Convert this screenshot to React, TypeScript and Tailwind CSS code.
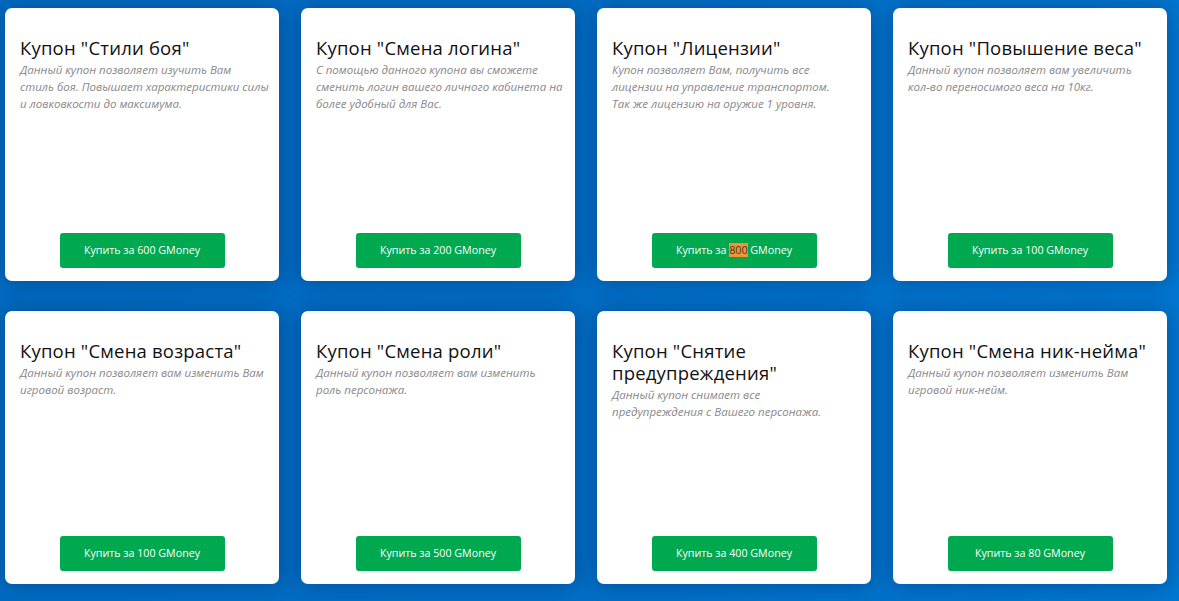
import React from "react";

type Coupon = {
  title: string;
  lines: string[];
  price: string;
  marked?: boolean;
};

const coupons: Coupon[] = [
  {
    title: 'Купон "Стили боя"',
    lines: [
      "Данный купон позволяет изучить Вам",
      "стиль боя. Повышает характеристики силы",
      "и ловковкости до максимума.",
    ],
    price: "600",
  },
  {
    title: 'Купон "Смена логина"',
    lines: [
      "С помощью данного купона вы сможете",
      "сменить логин вашего личного кабинета на",
      "более удобный для Вас.",
    ],
    price: "200",
  },
  {
    title: 'Купон "Лицензии"',
    lines: [
      "Купон позволяет Вам, получить все",
      "лицензии на управление транспортом.",
      "Так же лицензию на оружие 1 уровня.",
    ],
    price: "800",
    marked: true,
  },
  {
    title: 'Купон "Повышение веса"',
    lines: [
      "Данный купон позволяет вам увеличить",
      "кол-во переносимого веса на 10кг.",
    ],
    price: "100",
  },
  {
    title: 'Купон "Смена возраста"',
    lines: ["Данный купон позволяет вам изменить Вам", "игровой возраст."],
    price: "100",
  },
  {
    title: 'Купон "Смена роли"',
    lines: ["Данный купон позволяет вам изменить", "роль персонажа."],
    price: "500",
  },
  {
    title: 'Купон "Снятие предупреждения"',
    lines: ["Данный купон снимает все", "предупреждения с Вашего персонажа."],
    price: "400",
  },
  {
    title: 'Купон "Смена ник-нейма"',
    lines: ["Данный купон позволяет изменить Вам", "игровой ник-нейм."],
    price: "80",
  },
];

function CouponCard({ c }: { c: Coupon }) {
  return (
    <div className="bg-white rounded-[7px] h-[273px] flex flex-col px-[15px] pt-[29px] pb-[13px] shadow-[0_0_22px_rgba(0,35,90,0.45)]">
      <h3 className="text-[18.5px] leading-[22px] text-[#111] font-medium tracking-[0.2px]">
        {c.title}
      </h3>
      <p className="mt-[2px] text-[11.5px] leading-[17px] italic text-[#888]">
        {c.lines.map((l, i) => (
          <span key={i} className="block whitespace-nowrap">
            {l}
          </span>
        ))}
      </p>
      <div className="mt-auto flex justify-center">
        <button className="w-[165px] h-[35px] rounded-[3px] bg-[#00a84f] text-white text-[10.7px]">
          Купить за{" "}
          {c.marked ? (
            <span className="bg-[#f59331] text-[#3a3a3a]">{c.price}</span>
          ) : (
            c.price
          )}{" "}
          GMoney
        </button>
      </div>
    </div>
  );
}

export default function App() {
  return (
    <div
      className="min-h-[601px] w-full bg-gradient-to-r from-[#006cc2] via-[#006fc6] to-[#0077d0] pl-[5px] pt-[8px] pb-[17px]"
      style={{ fontFamily: '"Open Sans", "Noto Sans", sans-serif' }}
    >
      <div className="grid grid-cols-[repeat(4,274px)] gap-x-[22px] gap-y-[30px]">
        {coupons.map((c, i) => (
          <CouponCard key={i} c={c} />
        ))}
      </div>
    </div>
  );
}
